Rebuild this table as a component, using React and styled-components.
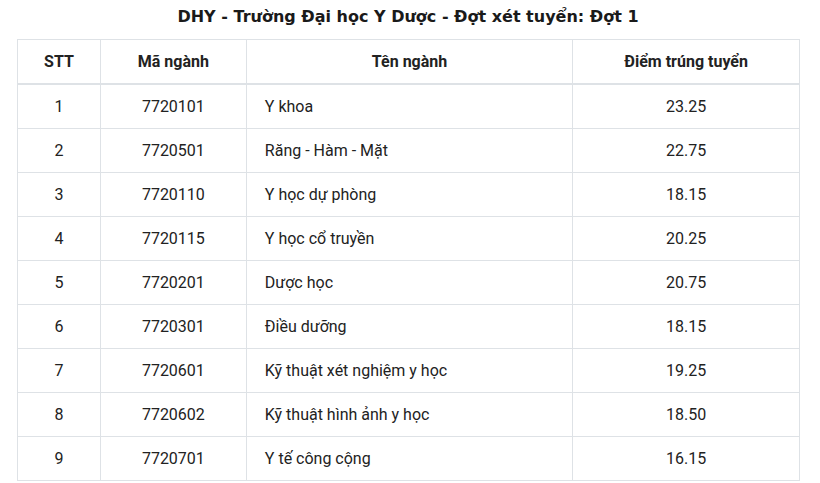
import React from "react";
import styled, { createGlobalStyle } from "styled-components";

const GlobalStyle = createGlobalStyle`
  body {
    margin: 0;
    background: #ffffff;
    font-family: Roboto, "Liberation Sans", sans-serif;
    color: #222;
  }
`;

const Page = styled.div`
  width: 820px;
  height: 483px;
  padding: 0 21px 0 17px;
  box-sizing: border-box;
`;

const Title = styled.h3`
  margin: 0;
  height: 39px;
  display: flex;
  align-items: center;
  justify-content: center;
  font-family: "DejaVu Sans", sans-serif;
  font-weight: bold;
  font-size: 16px;
  color: #1a1a1a;
  padding-bottom: 6px;
  box-sizing: border-box;
`;

const Table = styled.table`
  width: 783px;
  border-collapse: collapse;
  font-size: 16px;
`;

const Th = styled.th`
  height: 43px;
  padding: 0 12px;
  border: 1px solid #dee2e6;
  border-bottom: 2px solid #dee2e6;
  font-weight: 700;
  text-align: center;
  color: #222;
`;

const Td = styled.td`
  height: 43px;
  padding: ${(p) => (p.left ? "0 12px 0 18px" : "0 12px")};
  border: 1px solid #dee2e6;
  text-align: ${(p) => (p.left ? "left" : "center")};
  color: #222;
`;

const rows = [
  ["1", "7720101", "Y khoa", "23.25"],
  ["2", "7720501", "Răng - Hàm - Mặt", "22.75"],
  ["3", "7720110", "Y học dự phòng", "18.15"],
  ["4", "7720115", "Y học cổ truyền", "20.25"],
  ["5", "7720201", "Dược học", "20.75"],
  ["6", "7720301", "Điều dưỡng", "18.15"],
  ["7", "7720601", "Kỹ thuật xét nghiệm y học", "19.25"],
  ["8", "7720602", "Kỹ thuật hình ảnh y học", "18.50"],
  ["9", "7720701", "Y tế công cộng", "16.15"],
];

export default function App() {
  return (
    <Page>
      <GlobalStyle />
      <Title>DHY - Trường Đại học Y Dược - Đợt xét tuyển: Đợt 1</Title>
      <Table>
        <colgroup>
          <col style={{ width: 83 }} />
          <col style={{ width: 146 }} />
          <col style={{ width: 327 }} />
          <col style={{ width: 227 }} />
        </colgroup>
        <thead>
          <tr>
            <Th>STT</Th>
            <Th>Mã ngành</Th>
            <Th>Tên ngành</Th>
            <Th>Điểm trúng tuyển</Th>
          </tr>
        </thead>
        <tbody>
          {rows.map((r) => (
            <tr key={r[0]}>
              <Td>{r[0]}</Td>
              <Td>{r[1]}</Td>
              <Td left>{r[2]}</Td>
              <Td>{r[3]}</Td>
            </tr>
          ))}
        </tbody>
      </Table>
    </Page>
  );
}
